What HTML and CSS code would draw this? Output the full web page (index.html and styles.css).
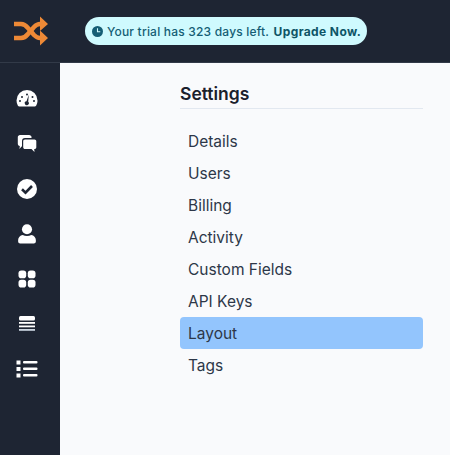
FILE: index.html
```html
<!DOCTYPE html>
<html lang="en">
  <head>
    <meta charset="UTF-8" />
    <meta name="viewport" content="width=device-width, initial-scale=1.0" />
    <title>Settings</title>
    <link rel="stylesheet" href="styles.css">
  </head>
  <body>
    <header class="topbar">
      <div class="logo">
        <svg width="36" height="30" viewBox="0 0 36 30" fill="none" stroke="#ed8936" stroke-width="4.500">
          <path d="M1 8h7c3 0 5 1.500 7 4l6 7c2 2 3 3 6 3h2" />
          <path d="M1 22h7c3 0 5-1.500 7-4l6-7c2-2 3-3 6-3h2" />
          <path d="M27 0.500l8 7.500-8 7zM27 14.500l8 7.500-8 7.500z" fill="#ed8936" stroke="none" />
        </svg>
      </div>
      <a class="trial" href="#">
        <svg width="11" height="11" viewBox="0 0 12 12">
          <circle cx="6" cy="6" r="6" fill="#155e75" />
          <path d="M6 2.500v3.700h3" fill="none" stroke="#cffafe" stroke-width="1.200" />
        </svg>
        <span>Your trial has 323 days left. <b>Upgrade Now.</b></span>
      </a>
    </header>
    <div class="main">
      <nav class="sidebar">
        <svg width="22" height="20" viewBox="0 0 22 20">
          <path fill="#fff" fill-rule="evenodd" d="M11 1a10.500 10.500 0 0 1 10.500 10.500c0 2-.5 3.700-1.400 5.200-.3.500-.8.800-1.400.8H3.300c-.6 0-1.100-.3-1.400-.8A10.400 10.400 0 0 1 .5 11.500 10.500 10.500 0 0 1 11 1zM4 11a1 1 0 1 0 0 2 1 1 0 0 0 0-2zm2-4a1 1 0 1 0 0 2 1 1 0 0 0 0-2zm5-2.500a1 1 0 1 0 0 2 1 1 0 0 0 0-2zM18 11a1 1 0 1 0 0 2 1 1 0 0 0 0-2zm-1.500-4a1 1 0 1 0 0 2 1 1 0 0 0 0-2zM12.800 5.800l-2.300 6.400a2 2 0 1 0 1.700.6z" />
        </svg>
        <svg width="20" height="20" viewBox="0 0 20 20">
          <path fill="#fff" d="M3 1h9c1.500 0 2.500 1 2.500 2v1H8C6 4 5 5.200 5 7v5.500l-.5 0L2.500 15l.3-3C1.500 11.800.8 11 .8 9.500V3.200C.8 2 1.800 1 3 1z" />
          <path fill="#fff" d="M8 5.500h9.500c1 0 1.800.8 1.800 1.800v5.900c0 1-.8 1.800-1.800 1.800h-.3l.3 3-3-3H8c-1 0-1.800-.8-1.800-1.800V7.300c0-1 .8-1.800 1.800-1.800z" />
        </svg>
        <svg width="20" height="20" viewBox="0 0 20 20">
          <circle cx="10" cy="10" r="10" fill="#fff" />
          <path d="M5 10.300l3.500 3.400 6.500-6.700" fill="none" stroke="#1e2533" stroke-width="2.600" />
        </svg>
        <svg width="20" height="21" viewBox="0 0 20 21">
          <circle cx="10" cy="5.500" r="5.300" fill="#fff" />
          <path fill="#fff" d="M5.500 11.500c1.300.8 2.800 1.200 4.500 1.200s3.200-.4 4.500-1.200c2.700.3 4.800 2.500 4.800 5.300v1.700c0 1.200-1 2.100-2.100 2.100H2.800c-1.100 0-2.100-.9-2.100-2.100v-1.700c0-2.800 2.100-5 4.800-5.300z" />
        </svg>
        <svg width="18" height="18" viewBox="0 0 18 18" fill="#fff">
          <rect x="0.500" y="0.500" width="7.700" height="7.700" rx="2.800" />
          <rect x="9.800" y="0.500" width="7.700" height="7.700" rx="2.800" />
          <rect x="0.500" y="9.800" width="7.700" height="7.700" rx="2.800" />
          <rect x="9.800" y="9.800" width="7.700" height="7.700" rx="2.800" />
        </svg>
        <svg width="18" height="16" viewBox="0 0 18 16" fill="#fff">
          <rect x="1" y="0" width="16" height="4.500" rx="1.500" />
          <rect x="1" y="6" width="16" height="1.800" />
          <rect x="1" y="9.500" width="16" height="1.800" />
          <rect x="1" y="13" width="16" height="1.800" fill="#cbd5e0" />
        </svg>
        <svg width="22" height="18" viewBox="0 0 22 18" fill="#fff">
          <rect x="0.500" y="0.500" width="4" height="4" />
          <rect x="0.500" y="7" width="4" height="4" />
          <rect x="0.500" y="13.500" width="4" height="4" />
          <rect x="7" y="1" width="14.500" height="2.500" rx="1" />
          <rect x="7" y="7.500" width="14.500" height="2.500" rx="1" />
          <rect x="7" y="14" width="14.500" height="2.500" rx="1" />
        </svg>
      </nav>
      <main class="content">
        <section class="settings">
          <h2>Settings</h2>
          <ul class="menu">
            <li><a href="#">Details</a></li>
            <li><a href="#">Users</a></li>
            <li><a href="#">Billing</a></li>
            <li><a href="#">Activity</a></li>
            <li><a href="#">Custom Fields</a></li>
            <li><a href="#">API Keys</a></li>
            <li><a href="#" class="active">Layout</a></li>
            <li><a href="#">Tags</a></li>
          </ul>
        </section>
      </main>
    </div>
  </body>
</html>
```

FILE: styles.css
```css
* {
  box-sizing: border-box;
}
body {
  font-family: Inter, "Liberation Sans", sans-serif;
  margin: 0;
  height: 455px;
  overflow: hidden;
  display: flex;
  flex-direction: column;
  background-color: #f9fafc;
  color: #2d3748;
}
a {
  color: inherit;
  text-decoration: none;
}
.topbar {
  height: 63px;
  flex: none;
  display: flex;
  align-items: center;
  background-color: #1e2533;
  border-bottom: 1px solid #323a48;
}
.logo {
  width: 60px;
  padding-left: 13px;
  display: flex;
  align-items: center;
}
.logo svg {
  display: block;
}
.trial {
  margin-left: 25px;
  height: 28px;
  width: 282px;
  padding-left: 7px;
  display: flex;
  align-items: center;
  gap: 4px;
  border-radius: 14px;
  background-color: #cffafe;
  color: #155e75;
  font-size: 12px;
  letter-spacing: 0.2px;
  font-weight: 500;
  white-space: nowrap;
}
.trial b {
  font-weight: 700;
  margin-left: 1px;
  letter-spacing: 0.4px;
  color: #0e5566;
}
.main {
  flex: 1;
  display: flex;
}
.sidebar {
  width: 60px;
  flex: none;
  padding: 26px 6px 0 0;
  display: flex;
  flex-direction: column;
  align-items: center;
  background-color: #1e2533;
}
.sidebar svg {
  display: block;
  height: 20px;
  margin-bottom: 25px;
}
.content {
  flex: 1;
  padding: 18px 27px 0 120px;
}
h2 {
  margin: 0 0 16px;
  height: 28px;
  font-size: 17.500px;
  line-height: 25px;
  font-weight: 600;
  color: #1a202c;
  border-bottom: 1px solid #e2e8f0;
}
.menu {
  list-style: none;
  margin: 0;
  padding: 0;
}
.menu a {
  display: block;
  height: 32px;
  padding: 0 8px;
  font-size: 15.500px;
  line-height: 34px;
  border-radius: 4px;
}
.menu a.active {
  background-color: #93c5fd;
}
```
